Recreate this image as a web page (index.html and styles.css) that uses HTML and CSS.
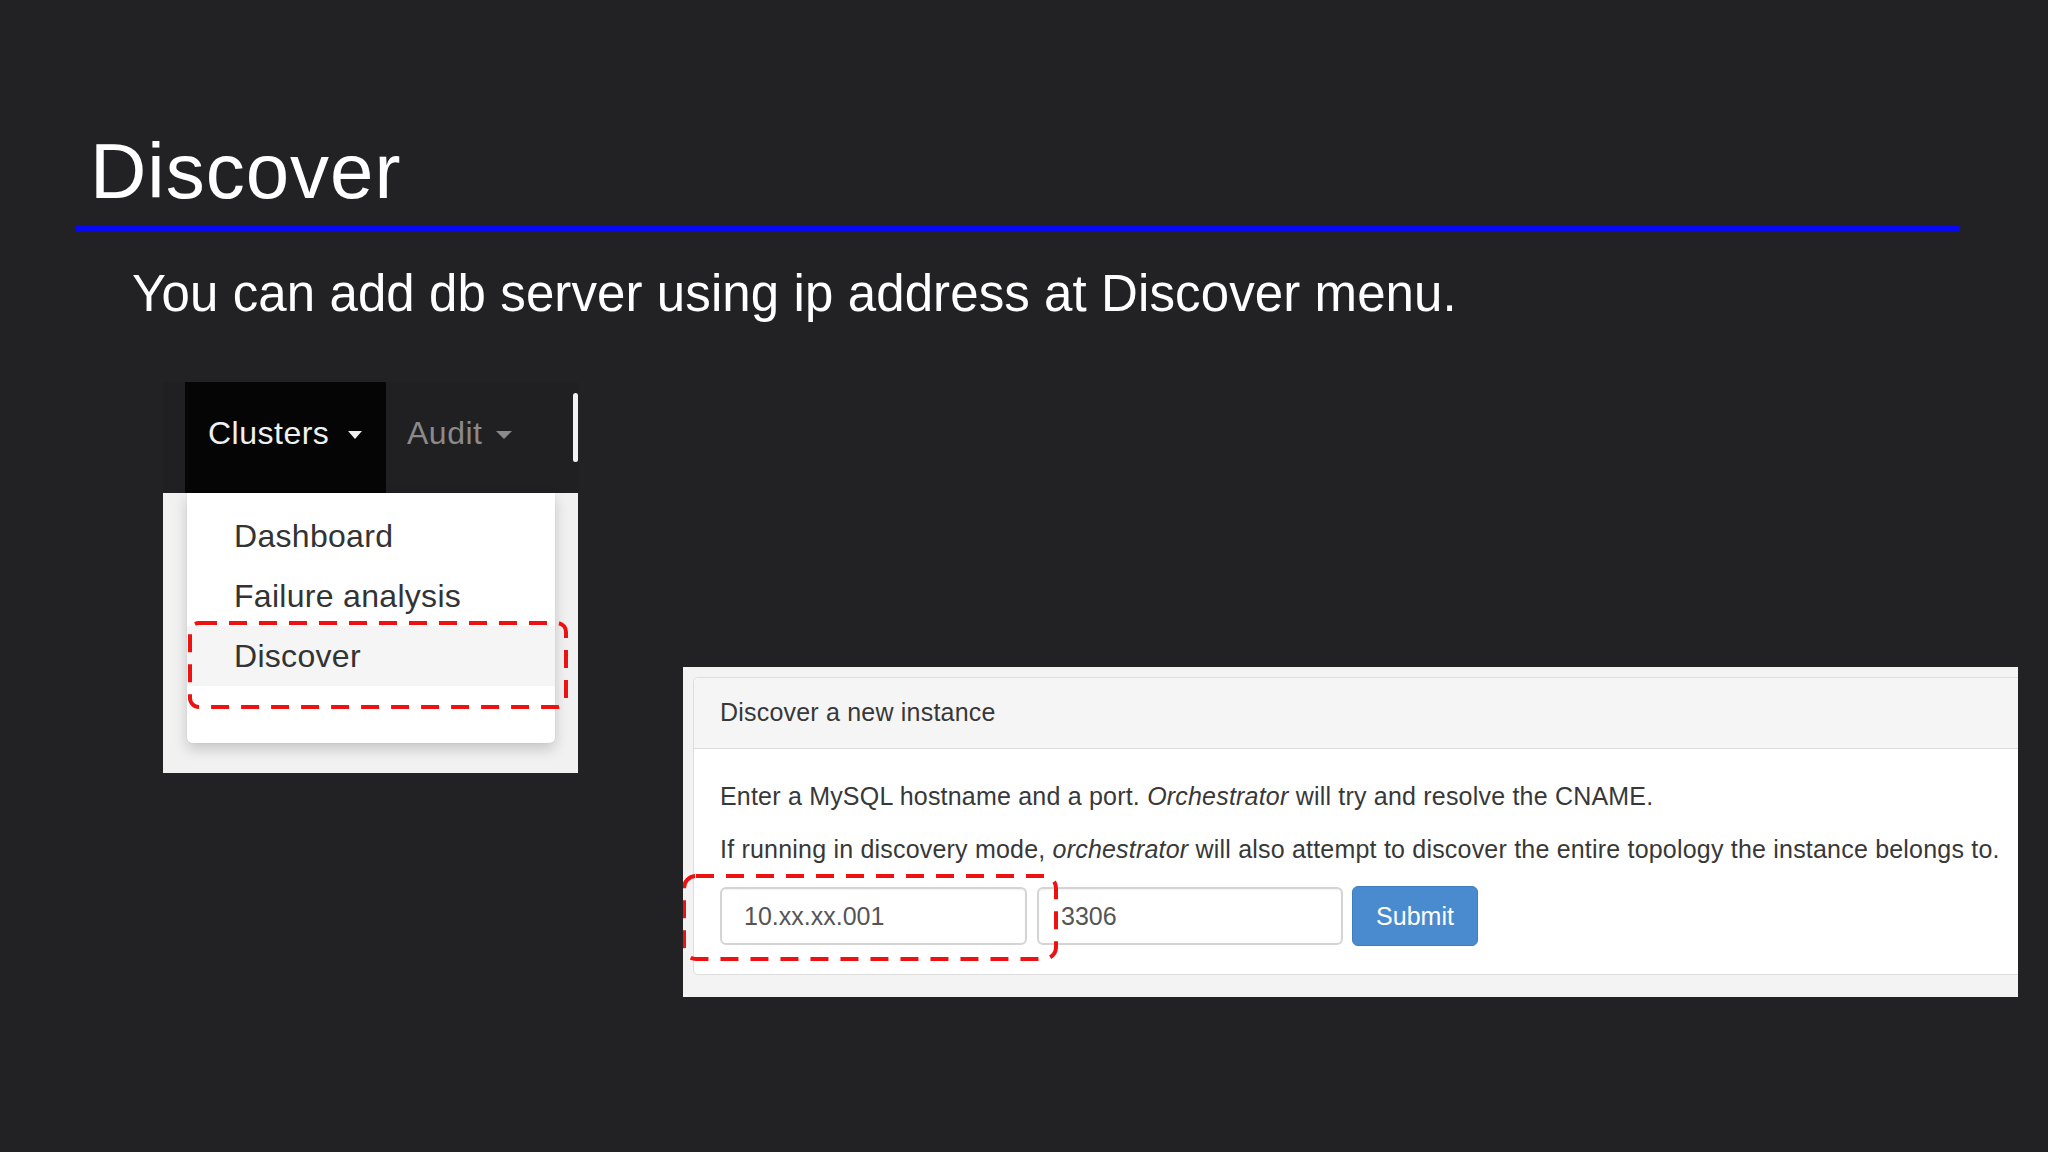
FILE: index.html
```html
<!DOCTYPE html>
<html>
<head>
<meta charset="utf-8">
<link rel="stylesheet" href="styles.css">
</head>
<body>
<div class="slide">
  <h1 class="title">Discover</h1>
  <div class="rule"></div>
  <p class="subtitle">You can add db server using ip address at Discover menu.</p>
  <div class="shots">
    <div class="menu-shot">
      <div class="nav">
        <div class="nav-item active">Clusters<span class="caret"></span></div>
        <div class="nav-item muted">Audit<span class="caret small"></span></div>
        <div class="nav-bar"></div>
      </div>
      <div class="drop-area">
        <div class="dropdown">
          <div class="drop-item">Dashboard</div>
          <div class="drop-item">Failure analysis</div>
          <div class="drop-item hover">Discover</div>
        </div>
      </div>
      <svg class="mark mark-menu" width="380" height="88" viewBox="0 0 380 88">
        <rect x="2" y="2" width="376" height="84" rx="9" ry="9" fill="none" stroke="#ee1111" stroke-width="4" stroke-dasharray="18 12"/>
      </svg>
    </div>
    <div class="panel-shot">
      <div class="panel">
        <div class="panel-heading">Discover a new instance</div>
        <div class="panel-body">
          <p class="line">Enter a MySQL hostname and a port. <em>Orchestrator</em> will try and resolve the CNAME.</p>
          <p class="line second">If running in discovery mode, <em>orchestrator</em> will also attempt to discover the entire topology the instance belongs to.</p>
          <div class="form-row">
            <div class="field host">10.xx.xx.001</div>
            <div class="field port">3306</div>
            <div class="btn">Submit</div>
          </div>
        </div>
      </div>
      <svg class="mark mark-form" width="376" height="87" viewBox="0 0 376 87">
        <rect x="2" y="2" width="372" height="83" rx="12" ry="12" fill="none" stroke="#ee1111" stroke-width="4" stroke-dasharray="18 12"/>
      </svg>
    </div>
  </div>
</div>
</body>
</html>
```

FILE: styles.css
```css
html, body {
  margin: 0;
  padding: 0;
  background: #222224;
}
.slide {
  width: 2048px;
  height: 1152px;
  overflow: hidden;
  background: #222224;
  font-family: "Liberation Sans", Arial, sans-serif;
  padding-top: 132px;
  box-sizing: border-box;
}
.title {
  margin: 0 0 0 90px;
  font-size: 78px;
  line-height: 78px;
  font-weight: normal;
  letter-spacing: 1px;
  color: #ffffff;
}
.rule {
  margin: 15px 0 0 75px;
  width: 1885px;
  height: 6px;
  background: #0808f8;
}
.subtitle {
  margin: 37px 0 0 132px;
  font-size: 51px;
  line-height: 51px;
  letter-spacing: 0.1px;
  color: #ffffff;
}
.shots {
  margin-top: 63px;
  padding-left: 163px;
  display: flex;
  align-items: flex-start;
  gap: 105px;
}
/* ---------- menu screenshot ---------- */
.menu-shot {
  position: relative;
  width: 415px;
}
.nav {
  height: 111px;
  display: flex;
  padding-left: 22px;
  background: #202022;
}
.nav-item {
  font-size: 32px;
  line-height: 102px;
  padding-bottom: 9px;
  letter-spacing: 0.5px;
  display: flex;
  align-items: flex-start;
}
.nav-item.active {
  background: #050505;
  color: #f0f0f0;
  width: 201px;
  padding-left: 23px;
  box-sizing: border-box;
}
.nav-item.muted {
  color: #8a8a8a;
  padding-left: 21px;
}
.caret {
  width: 0;
  height: 0;
  margin-top: 49px;
  margin-left: 19px;
  border-left: 7px solid transparent;
  border-right: 7px solid transparent;
  border-top: 8px solid currentColor;
}
.caret.small {
  margin-left: 14px;
  border-left-width: 8px;
  border-right-width: 8px;
}
.nav-bar {
  margin-left: auto;
  margin-top: 11px;
  width: 5px;
  height: 69px;
  border-radius: 3px;
  background: #f2f2f2;
}
.drop-area {
  height: 280px;
  background: #f1f1f1;
  padding-left: 24px;
}
.dropdown {
  width: 368px;
  height: 250px;
  box-sizing: border-box;
  padding-top: 13px;
  background: #ffffff;
  border-radius: 0 0 5px 5px;
  box-shadow: 0 6px 14px rgba(0, 0, 0, 0.18), 0 0 1px rgba(0, 0, 0, 0.2);
}
.drop-item {
  font-size: 32px;
  line-height: 60px;
  height: 60px;
  padding-left: 47px;
  letter-spacing: 0.3px;
  color: #333333;
}
.drop-item.hover {
  background: #f5f5f5;
}
.mark {
  position: absolute;
}
.mark-menu {
  left: 25px;
  top: 239px;
}
/* ---------- discover panel screenshot ---------- */
.panel-shot {
  position: relative;
  margin-top: 285px;
  width: 1335px;
  height: 330px;
  background: #f3f3f3;
  overflow: hidden;
  box-sizing: border-box;
  padding: 10px 0 0 10px;
}
.panel {
  width: 1400px;
  background: #ffffff;
  border: 1px solid #dddddd;
  border-radius: 5px;
}
.panel-heading {
  height: 70px;
  line-height: 68px;
  padding-left: 26px;
  font-size: 25px;
  letter-spacing: 0.2px;
  color: #383838;
  background: #f5f5f5;
  border-bottom: 1px solid #dddddd;
  border-radius: 5px 5px 0 0;
}
.panel-body {
  padding: 32px 0 28px 26px;
}
.line {
  margin: 0;
  font-size: 25px;
  line-height: 30px;
  letter-spacing: 0.2px;
  color: #383838;
}
.line.second {
  margin-top: 23px;
}
.form-row {
  margin-top: 22px;
  display: flex;
  align-items: center;
}
.field {
  width: 307px;
  height: 58px;
  box-sizing: border-box;
  border: 2px solid #d4d4d4;
  border-radius: 6px;
  box-shadow: inset 0 1px 2px rgba(0, 0, 0, 0.06);
  padding-left: 22px;
  font-size: 25px;
  line-height: 54px;
  color: #555555;
  background: #ffffff;
}
.field.port {
  margin-left: 10px;
  width: 306px;
}
.btn {
  margin-left: 9px;
  width: 126px;
  height: 60px;
  box-sizing: border-box;
  border-radius: 6px;
  background: #4a8bd0;
  border: 1px solid #3f7dbf;
  color: #ffffff;
  font-size: 25px;
  line-height: 58px;
  text-align: center;
}
.mark-form {
  left: -1px;
  top: 207px;
}
```
